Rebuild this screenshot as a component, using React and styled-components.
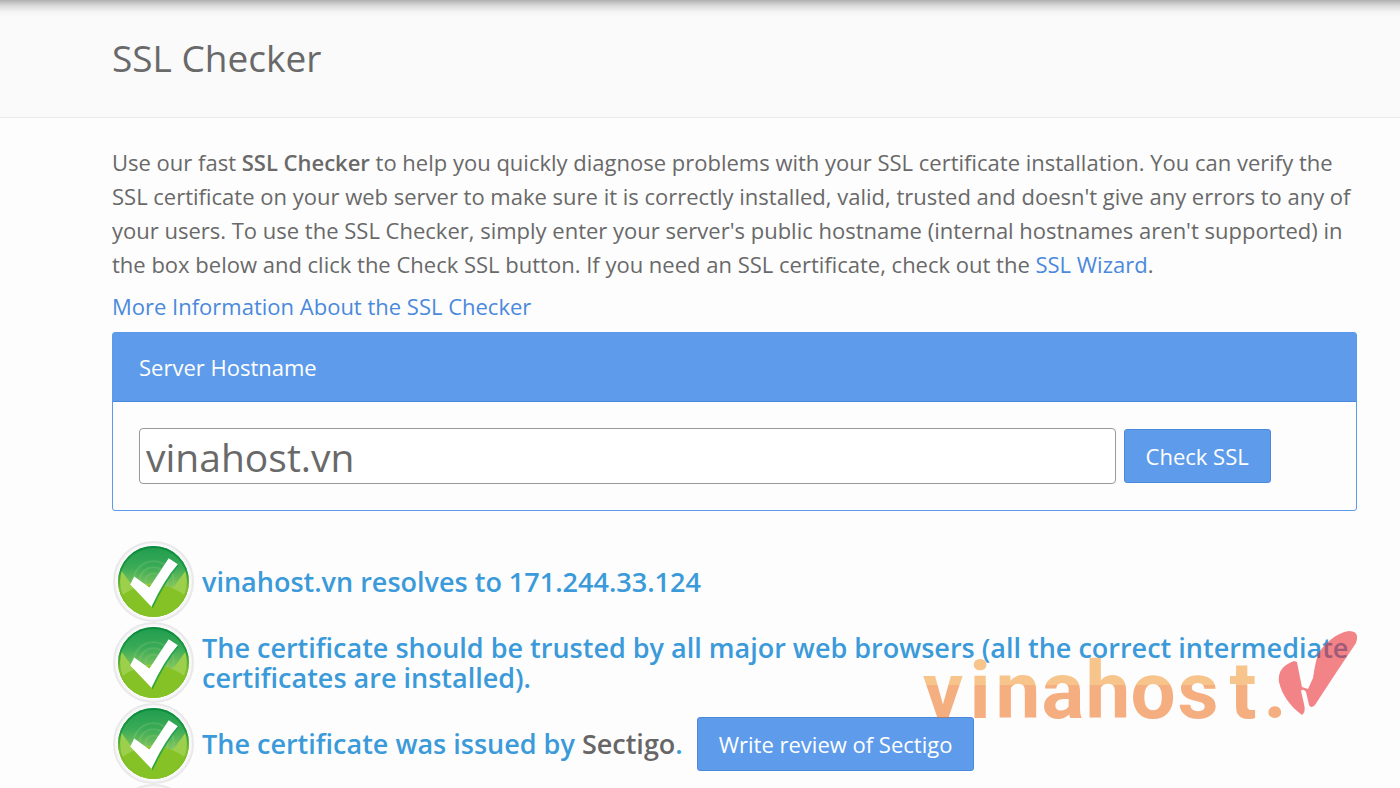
import React from "react";
import styled, { createGlobalStyle, css } from "styled-components";

export default function App() {
  return (
    <Page>
      <GlobalStyle />
      <PageHeader>
        <h1>SSL Checker</h1>
      </PageHeader>
      <Content>
        <Intro>
          Use our fast <strong>SSL Checker</strong> to help you quickly diagnose
          problems with your SSL certificate installation. You can verify the
          SSL certificate on your web server to make sure it is correctly
          installed, valid, trusted and doesn't give any errors to any of your
          users. To use the SSL Checker, simply enter your server's public
          hostname (internal hostnames aren't supported) in the box below and
          click the Check SSL button. If you need an SSL certificate, check out
          the <a href="#wizard">SSL Wizard</a>.
        </Intro>
        <MoreInfo href="#more">More Information About the SSL Checker</MoreInfo>
        <Panel>
          <PanelHeading htmlFor="hostname">Server Hostname</PanelHeading>
          <PanelForm onSubmit={(e) => e.preventDefault()}>
            <HostInput id="hostname" type="text" defaultValue="vinahost.vn" />
            <Button type="submit">Check SSL</Button>
          </PanelForm>
        </Panel>
        <Results>
          <Result>
            <CheckIcon />
            <h3>vinahost.vn resolves to 171.244.33.124</h3>
          </Result>
          <Result>
            <CheckIcon />
            <h3>
              The certificate should be trusted by all major web browsers (all
              the correct intermediate certificates are installed).
            </h3>
          </Result>
          <Result>
            <CheckIcon />
            <h3>
              The certificate was issued by <Issuer href="#sectigo">Sectigo</Issuer>.
            </h3>
            <Button type="button">Write review of Sectigo</Button>
          </Result>
          <Result>
            <CheckIcon />
          </Result>
          <Watermark />
        </Results>
      </Content>
    </Page>
  );
}

function CheckIcon() {
  return (
    <IconSvg viewBox="0 0 80 80" aria-hidden="true">
      <defs>
        <linearGradient id="dome" x1="0" y1="0" x2="0" y2="1">
          <stop offset="0" stopColor="#1f9c4e" />
          <stop offset="0.3" stopColor="#3aab57" />
          <stop offset="0.62" stopColor="#8ec95c" />
          <stop offset="1" stopColor="#9ad04c" />
        </linearGradient>
        <linearGradient id="rim" x1="0" y1="0" x2="0" y2="1">
          <stop offset="0" stopColor="#0a8a3c" />
          <stop offset="0.35" stopColor="#1f9a40" />
          <stop offset="0.6" stopColor="#7cbd2c" />
          <stop offset="1" stopColor="#85c226" />
        </linearGradient>
        <clipPath id="disc">
          <circle cx="40" cy="40" r="35" />
        </clipPath>
      </defs>
      <circle cx="40" cy="40" r="39" fill="#f7f7f7" stroke="#e9e9eb" strokeWidth="2" />
      <circle cx="40" cy="40" r="36" fill="#fff" />
      <circle cx="40" cy="40" r="35" fill="url(#dome)" />
      <g clipPath="url(#disc)">
        <g fill="none" stroke="#a9d98a" strokeOpacity="0.2" strokeWidth="2">
          <circle cx="40" cy="40" r="8" />
          <circle cx="40" cy="40" r="14" />
          <circle cx="40" cy="40" r="20" />
        </g>
        <path d="M0 80V42L8 29L21 47Q30 42 40 42Q50 42 58 48L72 29L80 42V80Z" fill="#9ccf4b" />
        <path d="M0 80V62Q18 43 40 43Q62 43 80 62V80Z" fill="#84c225" />
      </g>
      <circle cx="40" cy="40" r="34" fill="none" stroke="url(#rim)" strokeWidth="2" />
      <path d="M36 47L55 18L65 24Q51 41 39 67Z" fill="#0f984a" opacity="0.7" />
      <path d="M17 43L21 35L36 46L55 17L64 23Q50 39 38 65Z" fill="#fff" />
    </IconSvg>
  );
}

function Watermark() {
  return (
    <WatermarkSvg viewBox="-10 0 440 92" aria-hidden="true">
      <defs>
        <linearGradient id="tone" gradientUnits="userSpaceOnUse" x1="0" y1="0" x2="0" y2="92">
          <stop offset="0.61" stopColor="#f39a38" />
          <stop offset="0.61" stopColor="#ef7421" />
        </linearGradient>
      </defs>
      <WatermarkText
        x="16 53 91 136 181 226 271 316 348"
        y="89"
        textAnchor="middle"
        fill="url(#tone)"
      >
        vinahost.
      </WatermarkText>
      <path
        d="M367 32Q350 38 352 53C355 66 363 77 375 86Q379 83 377 75L374 62Q376 59 379 63L382 76Q384 80 388 76Q408 45 429 14Q433 2 422 2C409 4 398 14 391 25Q388 35 386 49L381 60L375 58Q372 44 370 33Z"
        fill="#ea2a30"
      />
    </WatermarkSvg>
  );
}

////
//style
/////

const GlobalStyle = createGlobalStyle`
  * {
    box-sizing: border-box;
  }
  body {
    margin: 0;
    background-color: #fdfdfd;
    color: #696969;
    font-family: "Open Sans", "Noto Sans", sans-serif;
    font-size: 22px;
    line-height: 34px;
  }
  h1, h3, p {
    margin: 0;
  }
  a {
    color: #4a89dc;
    text-decoration: none;
  }
`;

const Page = styled.main`
  height: 100vh;
  overflow: hidden;
`;

const gutters = css`
  padding-left: 112px;
  padding-right: 43px;
`;

const PageHeader = styled.header`
  ${gutters}
  padding-top: 31px;
  padding-bottom: 33px;
  background: linear-gradient(#b0b0b0, #dcdcdc 6px, #f4f4f4 12px, #fafafa 17px);
  border-bottom: 1px solid #e9e9e9;
  h1 {
    font-size: 37px;
    font-weight: 400;
    line-height: 53px;
  }
`;

const Content = styled.div`
  ${gutters}
  padding-top: 27px;
`;

const Intro = styled.p`
  margin-bottom: 8px;
  strong {
    font-weight: 600;
  }
`;

const MoreInfo = styled.a`
  display: block;
`;

const Panel = styled.section`
  margin-top: 9px;
  border: 1px solid #5b99ea;
  border-radius: 3px;
`;

const PanelHeading = styled.label`
  display: block;
  padding: 17px 26px;
  color: #fff;
  background-color: #5e9ceb;
  border-bottom: 1px solid #4a89dc;
`;

const PanelForm = styled.form`
  display: flex;
  align-items: center;
  gap: 8px;
  padding: 26px;
`;

const HostInput = styled.input`
  width: 82%;
  height: 56px;
  padding: 0 6px;
  border: 1px solid #999;
  border-radius: 4px;
  background-color: #fff;
  color: #696969;
  font-family: inherit;
  font-size: 39px;
`;

const Button = styled.button`
  flex: none;
  height: 54px;
  padding: 0 21px;
  border: 1px solid #4a89dc;
  border-radius: 3px;
  background-color: #5e9ceb;
  color: #fff;
  font-family: inherit;
  font-size: 22px;
`;

const Results = styled.div`
  position: relative;
  margin-top: 30px;
`;

const Result = styled.div`
  display: flex;
  align-items: center;
  height: 81px;
  padding-left: 1px;
  h3 {
    margin-left: 8px;
    margin-right: 14px;
    color: #3b9ad9;
    font-size: 27px;
    font-weight: 600;
    line-height: 30px;
  }
  h3:last-child {
    margin-right: 0;
  }
`;

const Issuer = styled.a`
  color: #666;
`;

const IconSvg = styled.svg`
  flex: none;
  width: 81px;
  height: 81px;
`;

const WatermarkSvg = styled.svg`
  position: absolute;
  top: 88px;
  right: 0;
  width: 440px;
  height: 92px;
  overflow: visible;
  opacity: 0.57;
  pointer-events: none;
`;

const WatermarkText = styled.text`
  font-family: Roboto, "Liberation Sans", sans-serif;
  font-size: 80px;
  font-weight: 700;
`;
